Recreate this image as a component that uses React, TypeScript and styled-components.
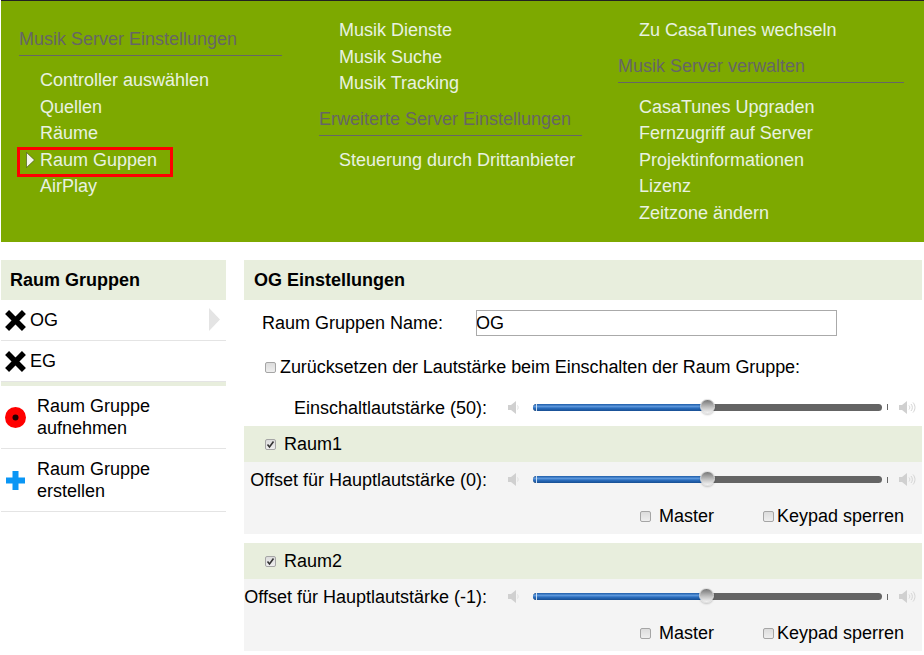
import styled, { createGlobalStyle } from "styled-components";

const GlobalStyle = createGlobalStyle`
    html, body {
        margin: 0;
        padding: 0;
        background: #fff;
        font-family: "Liberation Sans", Arial, sans-serif;
        color: #000;
    }
`;

const Page = styled.div`
    width: 924px;
    height: 655px;
    overflow: hidden;
    padding-left: 1px;
    box-sizing: border-box;
`;

const TopMenu = styled.div`
    height: 242px;
    box-sizing: border-box;
    background: #7da900;
    border-top: 1px solid #222;
    display: grid;
    grid-template-columns: 300px 299px 286px;
    padding: 0 0 0 18px;
`;

const MenuColumn = styled.div<{ $right: number; $indent: number }>`
    padding: 16px ${p => p.$right}px 0 0;
    display: flex;
    flex-direction: column;
    --indent: ${p => p.$indent}px;
`;

const MenuHeading = styled.div`
    font-size: 18px;
    line-height: 21px;
    color: #666;
    padding-bottom: 5px;
    border-bottom: 1px solid #666;
    margin: 12px 0 11px;
`;

const MenuItem = styled.div`
    position: relative;
    font-size: 18px;
    line-height: 26.6px;
    color: #e8f2e0;
    padding-left: var(--indent);
`;

const SelectedFrame = styled.span`
    position: absolute;
    left: -2px;
    top: 0;
    width: 156px;
    height: 30px;
    box-sizing: border-box;
    border: 3px solid #f00;
`;

const MenuArrow = styled.svg`
    position: absolute;
    left: 7px;
    top: 5px;
`;

const Content = styled.div`
    display: flex;
    align-items: flex-start;
    gap: 18px;
    padding-top: 18px;
`;

const Sidebar = styled.div`
    width: 225px;
    flex: none;
`;

const PanelHeader = styled.div<{ $left: number }>`
    height: 40px;
    display: flex;
    align-items: center;
    background: #e8eedd;
    font-size: 18px;
    font-weight: bold;
    padding-left: ${p => p.$left}px;
`;

const GroupRow = styled.div`
    position: relative;
    height: 40px;
    border-bottom: 1px solid #e4e4e4;
    display: flex;
    align-items: center;
    gap: 4px;
    padding-left: 4px;
    font-size: 18px;
`;

const RowArrow = styled.svg`
    position: absolute;
    right: 6px;
    top: 8px;
`;

const SideDivider = styled.div`
    height: 4px;
    background: #e8eedd;
`;

const ActionRow = styled.div`
    height: 62px;
    border-bottom: 1px solid #e4e4e4;
    display: flex;
    align-items: center;
    gap: 11px;
    padding-left: 4px;
    font-size: 18px;
    line-height: 22px;
`;

const ActionIcon = styled.svg`
    flex: none;
    width: 21px;
    height: 21px;
`;

const Main = styled.div`
    width: 678px;
    flex: none;
`;

const NameRow = styled.div`
    height: 46px;
    display: flex;
    align-items: center;
    padding-left: 18px;
    font-size: 18px;
`;

const NameLabel = styled.span`
    width: 214px;
`;

const NameInput = styled.input`
    width: 361px;
    height: 26px;
    box-sizing: border-box;
    border: 1px solid #aaa;
    background: #fff;
    font: 18px "Liberation Sans", Arial, sans-serif;
    padding: 0;
    margin: 0;
    text-indent: -1px;
    outline: none;
`;

const ResetRow = styled.div`
    height: 42px;
    display: flex;
    align-items: center;
    padding-left: 21px;
    font-size: 18px;
    letter-spacing: -0.07px;
    gap: 4px;
`;

const Box = styled.span`
    flex: none;
    width: 9px;
    height: 9px;
    border: 1px solid #a5a5a5;
    border-radius: 2px;
    background: linear-gradient(#dcdcdc, #eeeeee);
    display: inline-flex;
    align-items: center;
    justify-content: center;
`;

const SliderRow = styled.div<{ $height: number }>`
    height: ${p => p.$height}px;
    display: flex;
    align-items: center;
    font-size: 18px;
`;

const SliderLabel = styled.span`
    width: 243px;
    flex: none;
    padding-top: 2px;
    text-align: right;
    white-space: nowrap;
`;

const Speaker = styled.svg<{ $wide?: boolean }>`
    flex: none;
    margin-left: ${p => (p.$wide ? 11 : 21)}px;
`;

const Track = styled.div`
    position: relative;
    flex: none;
    width: 349px;
    height: 7px;
    margin-left: 14px;
    border-radius: 4px;
    background: #646464;
`;

const Filled = styled.div`
    position: absolute;
    left: 0;
    top: 0;
    bottom: 0;
    border-radius: 4px 0 0 4px;
    background: linear-gradient(#1d5ca8, #5c97dc 35%, #2a6dbd 60%, #174e92);

    &::before {
        content: "";
        position: absolute;
        left: 3px;
        top: 0;
        bottom: 0;
        width: 1px;
        background: #cfe0f2;
    }
`;

const Knob = styled.div`
    position: absolute;
    top: -5px;
    width: 15px;
    height: 15px;
    margin-left: -8px;
    box-sizing: border-box;
    border-radius: 50%;
    border: 1px solid #ddd;
    background: linear-gradient(#777, #c0c0c0 55%, #f4f4f4);
    box-shadow: 0 1px 2px rgba(0, 0, 0, 0.2);
`;

const EndTick = styled.span`
    flex: none;
    width: 1px;
    height: 6px;
    margin-left: 5px;
    background: #666;
`;

const RoomHeader = styled.div<{ $gapTop?: boolean }>`
    height: 36px;
    margin-top: ${p => (p.$gapTop ? 9 : 0)}px;
    background: #e8eedd;
    display: flex;
    align-items: center;
    gap: 8px;
    padding-left: 21px;
    font-size: 18px;
`;

const RoomBody = styled.div`
    background: #f4f4f4;
    height: 72px;
`;

const RoomOptions = styled.div`
    display: flex;
    align-items: center;
    height: 35px;
    padding-top: 2px;
    font-size: 18px;
`;

const OptionCheck = styled.label<{ $left: number; $gap: number }>`
    display: flex;
    align-items: center;
    margin-left: ${p => p.$left}px;
    gap: ${p => p.$gap}px;
`;

const CrossIcon = () => (
    <ActionIcon viewBox="0 0 21 21">
        <path d="M3 3 18 18M18 3 3 18" fill="none" stroke="#000" strokeWidth="6.500" strokeLinecap="square" transform="translate(10.5 10.5) scale(0.86) translate(-10.5 -10.5)" />
    </ActionIcon>
);

const Check = () => (
    <svg width="9" height="9" viewBox="0 0 9 9">
        <path d="M1.500 4.500 3.500 7 7.500 1.500" fill="none" stroke="#333" strokeWidth="1.6" />
    </svg>
);

const SpeakerLow = () => (
    <Speaker width="11" height="13" viewBox="0 0 11 13">
        <path d="M0 4h3l5-4v13l-5-4H0Z" fill="#d0d0d0" />
        <path d="M9.500 4.500c.8 1.200.8 2.800 0 4" fill="none" stroke="#dcdcdc" />
    </Speaker>
);

const SpeakerHigh = () => (
    <Speaker $wide width="17" height="13" viewBox="0 0 17 13">
        <path d="M0 4h3l5-4v13l-5-4H0Z" fill="#d0d0d0" />
        <path d="M10 4.500c1 1.200 1 2.800 0 4M12 3c1.800 2 1.800 5 0 7M14 1.500c2.600 3 2.600 7 0 10" fill="none" stroke="#d4d4d4" />
    </Speaker>
);

type SliderProps = { label: string; position: number; height: number };

function VolumeSlider({ label, position, height }: SliderProps) {
    return (
        <SliderRow $height={height}>
            <SliderLabel>{label}</SliderLabel>
            <SpeakerLow />
            <Track>
                <Filled style={{ width: position }} />
                <Knob style={{ left: position }} />
            </Track>
            <EndTick />
            <SpeakerHigh />
        </SliderRow>
    );
}

function Room({ name, label, position, gapTop }: { name: string; label: string; position: number; gapTop?: boolean }) {
    return (
        <>
            <RoomHeader $gapTop={gapTop}>
                <Box><Check /></Box>
                {name}
            </RoomHeader>
            <RoomBody>
                <VolumeSlider label={label} position={position} height={35} />
                <RoomOptions>
                    <OptionCheck $left={396} $gap={8}><Box />Master</OptionCheck>
                    <OptionCheck $left={49} $gap={3}><Box />Keypad sperren</OptionCheck>
                </RoomOptions>
            </RoomBody>
        </>
    );
}

export default function App() {
    return (
        <Page>
            <GlobalStyle />
            <TopMenu>
                <MenuColumn $right={37} $indent={21}>
                    <MenuHeading>Musik Server Einstellungen</MenuHeading>
                    <MenuItem>Controller auswählen</MenuItem>
                    <MenuItem>Quellen</MenuItem>
                    <MenuItem>Räume</MenuItem>
                    <MenuItem>
                        <SelectedFrame />
                        <MenuArrow width="9" height="16" viewBox="0 0 9 16">
                            <path d="M0.500 0.500 8.500 8 0.500 15.500Z" fill="#f4f6ea" stroke="#3d4a10" strokeWidth="0.6" />
                        </MenuArrow>
                        Raum Guppen
                    </MenuItem>
                    <MenuItem>AirPlay</MenuItem>
                </MenuColumn>
                <MenuColumn $right={36} $indent={20}>
                    <MenuItem>Musik Dienste</MenuItem>
                    <MenuItem>Musik Suche</MenuItem>
                    <MenuItem>Musik Tracking</MenuItem>
                    <MenuHeading>Erweiterte Server Einstellungen</MenuHeading>
                    <MenuItem>Steuerung durch Drittanbieter</MenuItem>
                </MenuColumn>
                <MenuColumn $right={0} $indent={21}>
                    <MenuItem>Zu CasaTunes wechseln</MenuItem>
                    <MenuHeading>Musik Server verwalten</MenuHeading>
                    <MenuItem>CasaTunes Upgraden</MenuItem>
                    <MenuItem>Fernzugriff auf Server</MenuItem>
                    <MenuItem>Projektinformationen</MenuItem>
                    <MenuItem>Lizenz</MenuItem>
                    <MenuItem>Zeitzone ändern</MenuItem>
                </MenuColumn>
            </TopMenu>
            <Content>
                <Sidebar>
                    <PanelHeader $left={9}>Raum Gruppen</PanelHeader>
                    <GroupRow>
                        <CrossIcon />
                        OG
                        <RowArrow width="11" height="23" viewBox="0 0 11 23">
                            <path d="M0 0 11 11.500 0 23Z" fill="#e4e4e4" />
                        </RowArrow>
                    </GroupRow>
                    <GroupRow>
                        <CrossIcon />
                        EG
                    </GroupRow>
                    <SideDivider />
                    <ActionRow>
                        <ActionIcon viewBox="0 0 21 21">
                            <circle cx="10.500" cy="10.500" r="10.500" fill="#f00" />
                            <circle cx="10.500" cy="10.500" r="3" fill="#200" />
                        </ActionIcon>
                        <span>Raum Gruppe<br />aufnehmen</span>
                    </ActionRow>
                    <ActionRow>
                        <ActionIcon viewBox="0 0 21 21">
                            <path d="M7.500 1h6v6.500H20v6h-6.500V20h-6v-6.500H1v-6h6.500Z" fill="#0a96f5" />
                        </ActionIcon>
                        <span>Raum Gruppe<br />erstellen</span>
                    </ActionRow>
                </Sidebar>
                <Main>
                    <PanelHeader $left={10}>OG Einstellungen</PanelHeader>
                    <NameRow>
                        <NameLabel>Raum Gruppen Name:</NameLabel>
                        <NameInput defaultValue="OG" />
                    </NameRow>
                    <ResetRow>
                        <Box />
                        Zurücksetzen der Lautstärke beim Einschalten der Raum Gruppe:
                    </ResetRow>
                    <VolumeSlider label="Einschaltlautstärke (50):" position={175} height={38} />
                    <Room name="Raum1" label="Offset für Hauptlautstärke (0):" position={175} />
                    <Room name="Raum2" label="Offset für Hauptlautstärke (-1):" position={174} gapTop />
                </Main>
            </Content>
        </Page>
    );
}
